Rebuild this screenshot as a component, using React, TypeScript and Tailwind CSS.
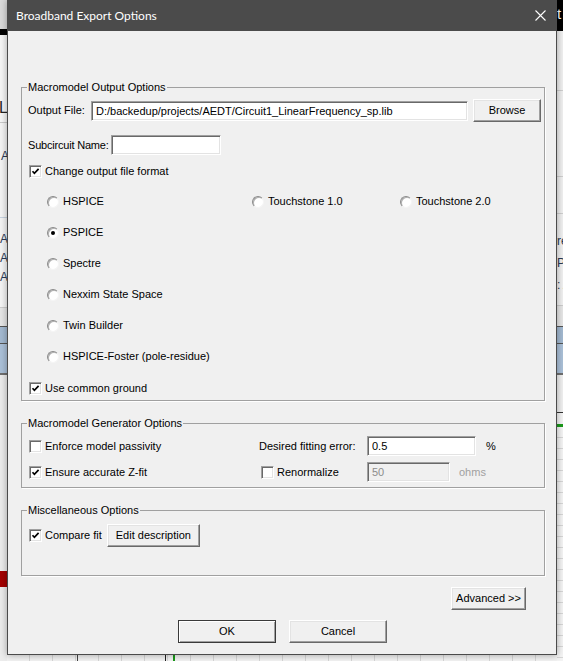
import React from "react";

const SANS = "font-['Liberation_Sans',Arial,sans-serif]";

const Check = ({ on }: { on?: boolean }) => (
  <span className="ml-px w-[13px] h-[13px] shrink-0 flex items-center justify-center bg-white border border-t-[#a0a0a0] border-l-[#a0a0a0] border-b-white border-r-white shadow-[inset_1px_1px_0_#696969,inset_-1px_-1px_0_#e3e3e3]">
    {on && (
      <svg width="9" height="9" viewBox="0 0 9 9">
        <path d="M1.5 4.2 L3.4 6.3 L7.6 1.8" fill="none" stroke="#000" strokeWidth="1.7" />
      </svg>
    )}
  </span>
);

const CheckItem = ({ label, on, className = "" }: { label: string; on?: boolean; className?: string }) => (
  <div className={`flex items-center gap-[3px] h-[13px] ${className}`}>
    <Check on={on} />
    <span className="whitespace-nowrap">{label}</span>
  </div>
);

const Radio = ({ on }: { on?: boolean }) => (
  <span className="w-[12px] h-[12px] shrink-0 rounded-full flex items-center justify-center bg-white border border-t-[#8a8a8a] border-l-[#8a8a8a] border-b-[#f4f4f4] border-r-[#f4f4f4] shadow-[inset_1px_1px_0_#b0b0b0]">
    {on && <span className="w-[4px] h-[4px] rounded-full bg-black" />}
  </span>
);

const Opt = ({ label, on, className = "" }: { label: string; on?: boolean; className?: string }) => (
  <div className={`flex items-center gap-[4px] h-[13px] ${className}`}>
    <Radio on={on} />
    <span className="whitespace-nowrap">{label}</span>
  </div>
);

const Field = ({ value, className, disabled }: { value: string; className: string; disabled?: boolean }) => (
  <input
    readOnly
    value={value}
    className={`h-[20px] shrink-0 px-[4px] text-[11px] outline-none border border-t-[#a0a0a0] border-l-[#a0a0a0] border-b-white border-r-white shadow-[inset_1px_1px_0_#696969,inset_-1px_-1px_0_#e3e3e3] ${
      disabled ? "bg-[#f0f0f0] text-[#8c8c8c]" : "bg-white text-black"
    } ${className}`}
  />
);

const Btn = ({ children, className = "", def }: { children: React.ReactNode; className?: string; def?: boolean }) => (
  <button
    className={`h-[23px] shrink-0 bg-[#f0f0f0] text-[11px] text-black border ${
      def
        ? "border-[#3a3a3a] shadow-[inset_1px_1px_0_#fff,inset_-1px_-1px_0_#a0a0a0]"
        : "border-t-white border-l-white border-b-[#696969] border-r-[#696969] shadow-[inset_-1px_-1px_0_#a0a0a0,inset_1px_1px_0_#e3e3e3]"
    } ${className}`}
  >
    {children}
  </button>
);

const Group = ({ title, className = "", children }: { title: string; className?: string; children: React.ReactNode }) => (
  <fieldset className={`w-[524px] border border-[#a0a0a0] pl-[6px] shadow-[1px_1px_0_#fff] ${className}`}>
    <legend className="-ml-px px-px leading-[13px]">{title}</legend>
    {children}
  </fieldset>
);

// bits of the application window behind the dialog
const LeftStrip = () => (
  <div className="w-[7px] h-[661px] shrink-0 flex flex-col bg-[#ececec] text-[#2a3a55] text-[12px] leading-[14px]">
    <div className="h-[29px] bg-[#dadada]" />
    <div className="h-[6px] bg-black" />
    <div className="h-[88px] flex flex-col justify-end items-end overflow-hidden bg-[#f6f6f6] border-b border-[#c9c9c9]">
      <span className="text-[16px] leading-[18px] mb-[5px] mr-[-1px] text-[#222]">L</span>
    </div>
    <div className="h-[95px] flex flex-col items-end overflow-hidden bg-[#f4f4f4] border-b border-[#c7d3e0] pt-[26px]">
      <span className="mr-[-2px]">A</span>
    </div>
    <div className="h-[90px] flex flex-col items-end overflow-hidden bg-[#f4f4f4] border-b border-[#cccccc] pt-[14px] gap-[5px]">
      <span className="whitespace-nowrap mr-[-1px]">-A</span>
      <span className="whitespace-nowrap mr-[-1px]">-A</span>
      <span className="whitespace-nowrap mr-[-1px]">: A</span>
    </div>
    <div className="h-[19px] bg-[#e6e6e6] border-b border-[#555]" />
    <div className="h-[17px] bg-[#a3b9d1] border-b border-[#555]" />
    <div className="h-[29px] bg-[#aac0d8]" />
    <div className="h-[2px] bg-[#6f6f6f]" />
    <div className="h-[196px] bg-[#ececec]" />
    <div className="h-[16px] bg-[#a30000]" />
    <div className="flex-1 bg-[#ececec]" />
  </div>
);

const RightStrip = () => (
  <div className="w-[6px] h-[661px] shrink-0 flex flex-col bg-[#f0f0f0] text-[#2a3a55] text-[12px] leading-[14px]">
    <div className="h-[31px] bg-black text-white text-[15px] leading-[18px] pt-[5px] overflow-hidden">t</div>
    <div className="h-[60px] border-b border-[#cfcfcf]" />
    <div className="h-[86px] border-b border-[#cfcfcf]" />
    <div className="h-[37px] border-b border-[#cfcfcf]" />
    <div className="h-[92px] border-b border-[#cccccc] overflow-hidden flex flex-col pt-[20px] gap-[8px]">
      <span className="whitespace-nowrap">re</span>
      <span className="whitespace-nowrap">Po</span>
      <span className="whitespace-nowrap">: A</span>
    </div>
    <div className="h-[21px] bg-[#e6e6e6] border-b border-[#555]" />
    <div className="h-[17px] bg-[#a3b9d1] border-b border-[#555]" />
    <div className="h-[29px] bg-[#aac0d8]" />
    <div className="h-[2px] bg-[#6f6f6f]" />
    <div className="h-[38px] border-b border-[#333]" />
    <div className="h-[11px] bg-[#f4f4f4]" />
    <div className="h-[3px] bg-[#1a9a1a]" />
    <div className="flex-1 bg-[repeating-linear-gradient(to_bottom,#f4f4f4_0px,#f4f4f4_10px,#d6d6d6_10px,#d6d6d6_11px)]" />
  </div>
);

const BottomStrip = () => (
  <div className="h-[6px] flex bg-[repeating-linear-gradient(to_right,#f2f2f2_0px,#f2f2f2_22px,#d6d6d6_22px,#d6d6d6_23px)]">
    <div className="w-[70px]" />
    <div className="w-px bg-[#444]" />
    <div className="w-[87px]" />
    <div className="w-px bg-[#222]" />
    <div className="w-[7px]" />
    <div className="w-[2px] bg-[#1a9a1a]" />
  </div>
);

export default function App() {
  return (
    <div className={`w-[563px] h-[661px] overflow-hidden flex bg-[#ececec] ${SANS} text-[11px] leading-[13px] text-black`}>
      <LeftStrip />
      <div className="w-[550px] shrink-0 flex flex-col">
        <div className="relative z-10 w-[550px] h-[655px] flex flex-col bg-[#4b4b4b] px-px pb-px shadow-[0_0_7px_rgba(0,0,0,0.35)]">
          {/* title bar */}
          <div className="h-[31px] shrink-0 flex items-center justify-between pl-[8px] pr-[10px] text-white font-['Lato',sans-serif] text-[12px]">
            <span>Broadband Export Options</span>
            <svg width="11" height="11" viewBox="0 0 11 11">
              <path d="M0.5 0.5 L10.5 10.5 M10.5 0.5 L0.5 10.5" stroke="#fff" strokeWidth="1.1" />
            </svg>
          </div>

          <div className="flex-1 bg-[#f0f0f0] flex flex-col pl-[13px]">
            <Group title="Macromodel Output Options" className="mt-[50px] pb-[5px]">
              <div className="mt-[6px] flex items-center h-[21px]">
                <span className="w-[63px] shrink-0 whitespace-nowrap">Output File:</span>
                <Field className="w-[377px]" value="D:/backedup/projects/AEDT/Circuit1_LinearFrequency_sp.lib" />
                <Btn className="ml-[5px] w-[68px]">Browse</Btn>
              </div>
              <div className="mt-[14px] flex items-center h-[20px]">
                <span className="mr-[2px] shrink-0 whitespace-nowrap tracking-[-0.2px]">Subcircuit Name:</span>
                <Field className="w-[110px]" value="" />
              </div>
              <CheckItem className="mt-[10px]" on label="Change output file format" />
              <div className="mt-[17px] ml-[19px] flex flex-col gap-[18px]">
                <div className="flex">
                  <Opt className="w-[205px]" label="HSPICE" />
                  <Opt className="w-[148px]" label="Touchstone 1.0" />
                  <Opt label="Touchstone 2.0" />
                </div>
                <Opt on label="PSPICE" />
                <Opt label="Spectre" />
                <Opt label="Nexxim State Space" />
                <Opt label="Twin Builder" />
                <Opt label="HSPICE-Foster (pole-residue)" />
              </div>
              <CheckItem className="mt-[19px]" on label="Use common ground" />
            </Group>

            <Group title="Macromodel Generator Options" className="mt-[16px] pb-[5px]">
              <div className="mt-[6px] flex flex-col gap-[6px]">
                <div className="flex items-center h-[20px]">
                  <CheckItem className="w-[231px]" label="Enforce model passivity" />
                  <span className="w-[108px] shrink-0 whitespace-nowrap">Desired fitting error:</span>
                  <Field className="w-[109px]" value="0.5" />
                  <span className="ml-[10px]">%</span>
                </div>
                <div className="flex items-center h-[20px]">
                  <CheckItem className="w-[231px]" on label="Ensure accurate Z-fit" />
                  <div className="w-[108px] shrink-0 pl-px">
                    <CheckItem label="Renormalize" />
                  </div>
                  <Field className="w-[83px]" value="50" disabled />
                  <span className="ml-[9px] text-[#a0a0a0]">ohms</span>
                </div>
              </div>
            </Group>

            <Group title="Miscellaneous Options" className="mt-[16px] pb-[28px]">
              <div className="mt-[7px] flex items-center h-[23px]">
                <CheckItem on label="Compare fit" />
                <Btn className="ml-[5px] w-[93px]">Edit description</Btn>
              </div>
            </Group>

            <div className="mt-[11px] w-[505px] flex justify-end">
              <Btn className="w-[75px]">Advanced &gt;&gt;</Btn>
            </div>

            <div className="mt-[10px] pl-[157px] flex gap-[13px]">
              <Btn def className="w-[98px]">OK</Btn>
              <Btn className="w-[98px]">Cancel</Btn>
            </div>
          </div>
        </div>
        <BottomStrip />
      </div>
      <RightStrip />
    </div>
  );
}
